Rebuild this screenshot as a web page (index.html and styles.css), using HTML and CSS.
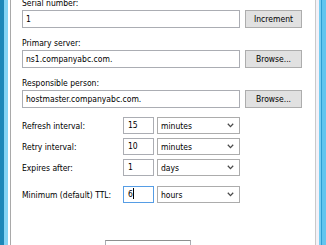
FILE: index.html
```html
<!DOCTYPE html>
<html lang="en">

<head>
    <meta charset="UTF-8">
    <meta name="viewport" content="width=device-width, initial-scale=1.0">
    <title>Start of Authority (SOA)</title>
    <link rel="stylesheet" href="styles.css">
</head>

<body>
    <div class="window">
        <div class="frame-left"></div>
        <div class="dialog">
            <div class="tab-page">
                <div class="field">
                    <div class="field-label">Serial number:</div>
                    <div class="field-row">
                        <div class="textbox">1</div>
                        <div class="button">Increment</div>
                    </div>
                </div>
                <div class="field">
                    <div class="field-label">Primary server:</div>
                    <div class="field-row">
                        <div class="textbox">ns1.companyabc.com.</div>
                        <div class="button">Browse...</div>
                    </div>
                </div>
                <div class="field">
                    <div class="field-label">Responsible person:</div>
                    <div class="field-row">
                        <div class="textbox">hostmaster.companyabc.com.</div>
                        <div class="button">Browse...</div>
                    </div>
                </div>

                <div class="intervals">
                    <div class="interval-row">
                        <div class="interval-label">Refresh interval:</div>
                        <div class="number">15</div>
                        <div class="select">minutes
                            <svg width="7" height="5" viewBox="0 0 7 5"><path d="M0.8 0.8 L3.5 3.6 L6.2 0.8" fill="none" stroke="#4a4a4a" stroke-width="1.3"/></svg>
                        </div>
                    </div>
                    <div class="interval-row">
                        <div class="interval-label">Retry interval:</div>
                        <div class="number">10</div>
                        <div class="select">minutes
                            <svg width="7" height="5" viewBox="0 0 7 5"><path d="M0.8 0.8 L3.5 3.6 L6.2 0.8" fill="none" stroke="#4a4a4a" stroke-width="1.3"/></svg>
                        </div>
                    </div>
                    <div class="interval-row">
                        <div class="interval-label">Expires after:</div>
                        <div class="number">1</div>
                        <div class="select">days
                            <svg width="7" height="5" viewBox="0 0 7 5"><path d="M0.8 0.8 L3.5 3.6 L6.2 0.8" fill="none" stroke="#4a4a4a" stroke-width="1.3"/></svg>
                        </div>
                    </div>
                    <div class="interval-row ttl">
                        <div class="interval-label">Minimum (default) TTL:</div>
                        <div class="number focused">6<span class="caret"></span></div>
                        <div class="select">hours
                            <svg width="7" height="5" viewBox="0 0 7 5"><path d="M0.8 0.8 L3.5 3.6 L6.2 0.8" fill="none" stroke="#4a4a4a" stroke-width="1.3"/></svg>
                        </div>
                    </div>
                </div>

                <div class="record-row">
                    <div class="record-label">TTL for this record:</div>
                    <div class="record-box">0 &nbsp;&nbsp;:1 &nbsp;&nbsp;:0 &nbsp;&nbsp;:0</div>
                    <div class="record-hint">(DDDDD:HH.MM.SS)</div>
                </div>
            </div>
        </div>
        <div class="frame-right"></div>
    </div>
</body>

</html>
```

FILE: styles.css
```css
body {
    margin: 0;
    font-family: "DejaVu Sans Condensed", "DejaVu Sans", sans-serif;
    font-size: 8.5px;
    color: #000;
    background-color: #fff;
    overflow: hidden;
}

.window {
    display: flex;
    height: 245px;
    overflow: hidden;
}

.frame-left {
    width: 8px;
    background: linear-gradient(to right, #1d88b8 0, #1d88b8 4px, #84d4f4 4px, #84d4f4 8px);
}

.frame-right {
    width: 7px;
    background: linear-gradient(to right, #78cff2 0, #78cff2 2px, #2f9fd4 2px, #2f9fd4 3px, #62c5ef 3px, #62c5ef 7px);
}

.dialog {
    flex: 1;
    display: flex;
    border-left: 2px solid #fff;
    border-right: 3px solid #f3f1f7;
}

.tab-page {
    flex: 1;
    margin-top: -3px;
    padding: 0 13px 0 11px;
    border-left: 1px solid #a9a9a9;
    border-right: 1px solid #c9c9c9;
}

.field {
    margin-bottom: 9px;
}

.field-label {
    line-height: 12px;
    margin-bottom: 1px;
}

.field-row {
    display: flex;
    gap: 5px;
}

.textbox {
    width: 218px;
    height: 18px;
    box-sizing: border-box;
    border: 1px solid #abadb3;
    padding: 0 3px;
    line-height: 16px;
}

.button {
    width: 57px;
    height: 18px;
    box-sizing: border-box;
    border: 1px solid #adadad;
    background-color: #e1e1e1;
    text-align: center;
    line-height: 16px;
}

.intervals {
    display: flex;
    flex-direction: column;
    gap: 4px;
}

.interval-row {
    display: flex;
    align-items: center;
    height: 17px;
}

.interval-row.ttl {
    margin-top: 6px;
}

.interval-label {
    width: 101px;
}

.number {
    width: 31px;
    height: 17px;
    box-sizing: border-box;
    border: 1px solid #abadb3;
    padding: 0 4px;
    line-height: 15px;
}

.number.focused {
    border-color: #569de5;
}

.caret {
    display: inline-block;
    width: 1px;
    height: 11px;
    background-color: #000;
    vertical-align: -2px;
}

.select {
    width: 83px;
    height: 17px;
    margin-left: 3px;
    box-sizing: border-box;
    border: 1px solid #acacac;
    padding: 0 5px 0 3px;
    display: flex;
    justify-content: space-between;
    align-items: center;
}

.record-row {
    display: flex;
    align-items: center;
    margin-top: 37px;
    height: 18px;
}

.record-label {
    width: 83px;
}

.record-box {
    width: 86px;
    height: 18px;
    box-sizing: border-box;
    border: 1px solid #abadb3;
    border-top-color: #8e8f8f;
    padding: 0 3px;
    line-height: 16px;
}

.record-hint {
    margin-left: 6px;
}
```
